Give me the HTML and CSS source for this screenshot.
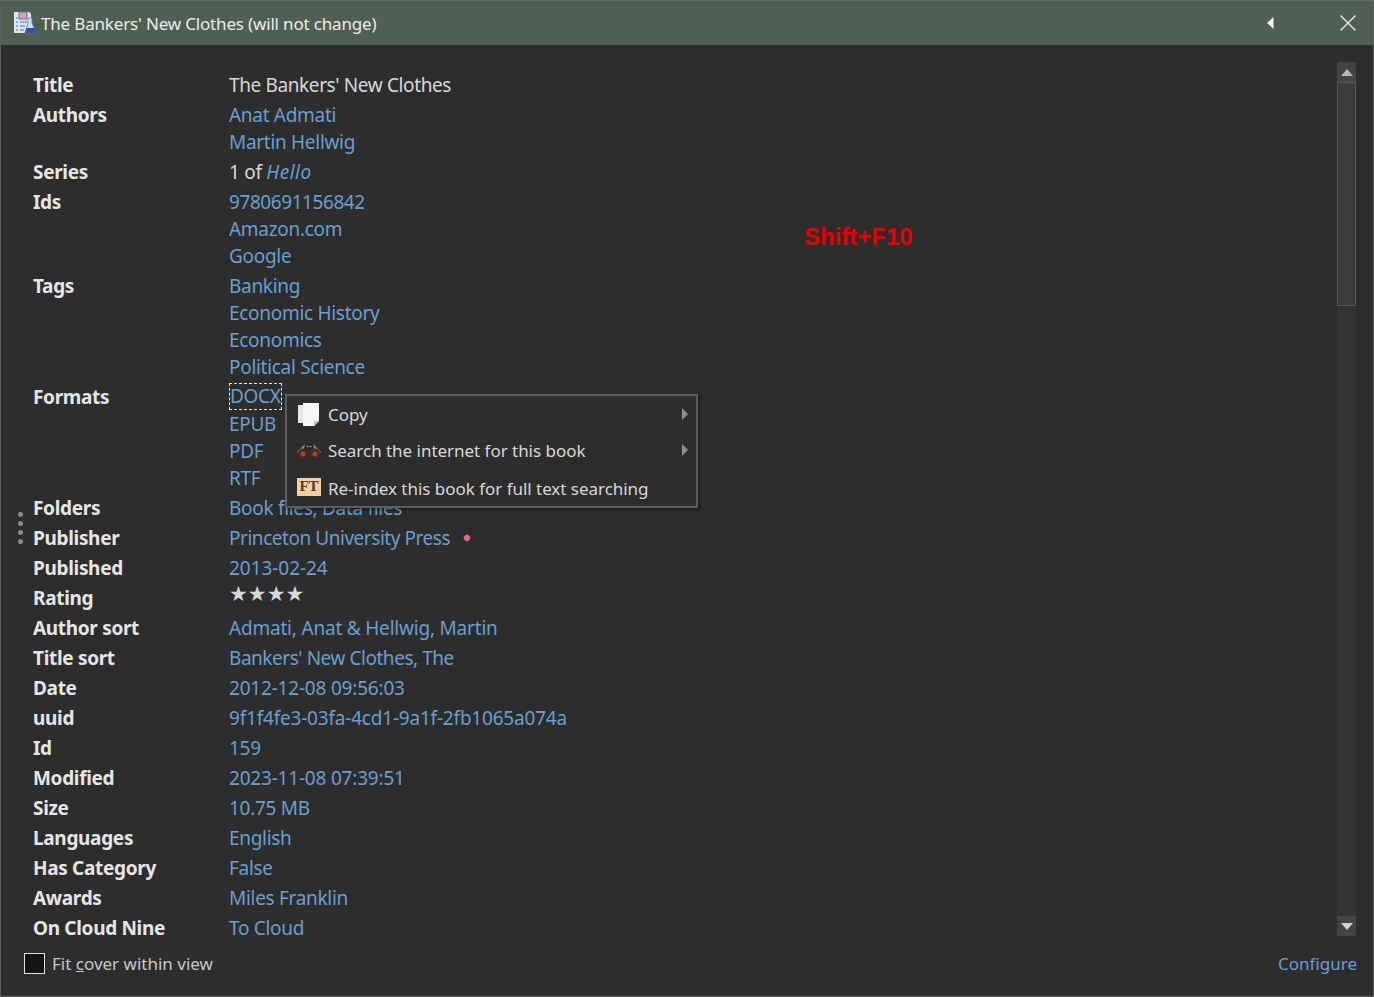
FILE: index.html
```html
<!DOCTYPE html>
<html lang="en">
<head>
<meta charset="utf-8">
<title>The Bankers' New Clothes (will not change)</title>
<link rel="stylesheet" href="styles.css">
</head>
<body>
<div class="window">
  <header class="titlebar">
    <svg class="app-icon" width="24" height="26" viewBox="0 0 24 26">
      <path d="M1 3h15l2 2v19H1z" fill="#dfe6f2"/>
      <path d="M6 3h8v7H6z" fill="#c9a3b4" stroke="#7d6a90" stroke-width="1"/>
      <path d="M3 9h2M3 13h2M3 17h2M3 21h2M7 13h7M7 17h5M7 21h4" stroke="#5a6c9a" stroke-width="1.2"/>
      <path d="M15 9h4v5l4 10H12l3-10z" fill="#cfdcea" stroke="#6f7f99" stroke-width=".8"/>
      <path d="M13.5 19h8l1.5 5H12z" fill="#2f55a8"/>
    </svg>
    <span class="title-text">The Bankers' New Clothes (will not change)</span>
    <svg class="prev-icon" width="8" height="14" viewBox="0 0 8 14"><path d="M7.500 1v12L1 7z" fill="#f4f4f4"/></svg>
    <svg class="close-icon" width="16" height="16" viewBox="0 0 16 16"><path d="M.5.5l15 15M15.500.5l-15 15" stroke="#f2f2f2" stroke-width="1.200" fill="none"/></svg>
  </header>

  <main class="body-row">
    <div class="details">
      <div class="label">Title</div><div class="value plain narrow-plain">The Bankers' New Clothes</div>
      <div class="label">Authors</div><div class="value"><a>Anat Admati</a><a>Martin Hellwig</a></div>
      <div class="label">Series</div><div class="value plain">1 of <a class="inline"><em>Hello</em></a></div>
      <div class="label">Ids</div><div class="value"><a class="digits">9780691156842</a><a>Amazon.com</a><a>Google</a></div>
      <div class="label">Tags</div><div class="value"><a>Banking</a><a>Economic History</a><a>Economics</a><a>Political Science</a></div>
      <div class="label">Formats</div><div class="value"><a><span class="focused">DOCX</span></a><a>EPUB</a><a>PDF</a><a>RTF</a></div>
      <div class="label">Folders</div><div class="value"><a>Book files, Data files</a></div>
      <div class="label">Publisher</div><div class="value"><a class="narrow">Princeton University Press<span class="pink-dot"></span></a></div>
      <div class="label">Published</div><div class="value"><a class="loose">2013-02-24</a></div>
      <div class="label">Rating</div><div class="value plain stars">★★★★</div>
      <div class="label">Author sort</div><div class="value"><a class="stamp">Admati, Anat &amp; Hellwig, Martin</a></div>
      <div class="label">Title sort</div><div class="value"><a class="narrow">Bankers' New Clothes, The</a></div>
      <div class="label">Date</div><div class="value"><a class="stamp">2012-12-08 09:56:03</a></div>
      <div class="label">uuid</div><div class="value"><a class="stamp">9f1f4fe3-03fa-4cd1-9a1f-2fb1065a074a</a></div>
      <div class="label">Id</div><div class="value"><a>159</a></div>
      <div class="label">Modified</div><div class="value"><a class="stamp">2023-11-08 07:39:51</a></div>
      <div class="label">Size</div><div class="value"><a>10.75 MB</a></div>
      <div class="label">Languages</div><div class="value"><a>English</a></div>
      <div class="label">Has Category</div><div class="value"><a>False</a></div>
      <div class="label">Awards</div><div class="value"><a>Miles Franklin</a></div>
      <div class="label">On Cloud Nine</div><div class="value"><a>To Cloud</a></div>
    </div>
    <div class="scrollbar">
      <div class="sb-btn"><svg width="12" height="7" viewBox="0 0 12 7"><path d="M6 0l6 7H0z" fill="#b5b5b5"/></svg></div>
      <div class="sb-thumb"></div>
      <div class="sb-track"></div>
      <div class="sb-btn"><svg width="12" height="7" viewBox="0 0 12 7"><path d="M0 0h12L6 7z" fill="#d0d0d0"/></svg></div>
    </div>
  </main>

  <footer class="footer">
    <label class="fit"><span class="checkbox"></span><span>Fit <u>c</u>over within view</span></label>
    <a class="configure">Configure</a>
  </footer>

  <div class="grip"><i></i><i></i><i></i><i></i></div>
  <div class="shortcut">Shift+F10</div>

  <div class="menu">
    <div class="menu-item">
      <svg class="menu-icon" width="24" height="24" viewBox="0 0 24 24">
        <path d="M1 3h12v18H1z" fill="#e4e4e4"/>
        <path d="M6 1h16v18l-5 5H6z" fill="#f7f7f7"/>
        <path d="M17 24v-5h5z" fill="#bdbdbd"/>
      </svg>
      <span class="menu-text">Copy</span>
      <span class="arrow"></span>
    </div>
    <div class="menu-item">
      <svg class="menu-icon" width="24" height="24" viewBox="0 0 24 24">
        <path d="M8 6L0 14l3 3 7-7zM16 6l8 8-3 3-7-7z" fill="#8c8c90"/>
        <path d="M8 6h8l1 5H7z" fill="#26262c"/>
        <circle cx="10.500" cy="8.500" r="1" fill="#9a9a9e"/>
        <circle cx="13.500" cy="8.500" r="1" fill="#9a9a9e"/>
        <circle cx="6" cy="15.500" r="5" fill="#4f261c"/>
        <circle cx="18" cy="15.500" r="5" fill="#4f261c"/>
        <circle cx="6" cy="16" r="2.500" fill="#8f4f36"/>
        <circle cx="18" cy="16" r="2.500" fill="#8f4f36"/>
      </svg>
      <span class="menu-text">Search the internet for this book</span>
      <span class="arrow"></span>
    </div>
    <div class="menu-item last">
      <span class="ft-icon">FT</span>
      <span class="menu-text">Re-index this book for full text searching</span>
    </div>
  </div>
</div>
</body>
</html>
```

FILE: styles.css
```css
* { box-sizing: border-box; }
html, body { margin: 0; height: 100%; }
body {
  background: #2d2d2d;
  font-family: "Noto Sans", "Open Sans", sans-serif;
  font-size: 19px;
  letter-spacing: -0.3px;
  color: #dcdcdc;
  overflow: hidden;
}
.window {
  position: relative;
  width: 1374px;
  height: 997px;
  display: flex;
  flex-direction: column;
  border: 1px solid #5c5f5c;
  border-top: 0;
}
.titlebar {
  height: 45px;
  flex: none;
  display: flex;
  align-items: center;
  background: #505f53;
  border-top: 1px solid #5f6c60;
  padding: 0 17px 0 12px;
  color: #ececec;
}
.app-icon { flex: none; margin-right: 4px; margin-top: -2px; }
.title-text { flex: 1; font-size: 17px; letter-spacing: -0.17px; }
.prev-icon { flex: none; margin-right: 66px; }
.close-icon { flex: none; }

.body-row {
  flex: 1;
  min-height: 0;
  display: flex;
  padding: 17px 17px 0 32px;
}
.details {
  flex: 1;
  display: grid;
  grid-template-columns: 196px 1fr;
  grid-auto-rows: min-content;
  row-gap: 3px;
  padding-top: 10px;
  line-height: 27px;
}
.label { font-weight: 700; color: #e6e6e6; letter-spacing: -0.32px; }
.value a { display: block; color: #6a9fd0; }
.value a.inline { display: inline; }
.value a.inline em { letter-spacing: 0.5px; }
.value a.stamp { letter-spacing: -0.2px; }
.value a.loose { letter-spacing: -0.05px; }
.value a.narrow { letter-spacing: -0.46px; }
.value a.digits { letter-spacing: -0.43px; }
.value.plain { color: #d8d8d8; }
.value.narrow-plain { letter-spacing: -0.38px; }
.focused { border: 1px dashed #e8e8e8; display: inline-block; height: 27px; line-height: 25px; margin-top: -1px; vertical-align: top; }
.pink-dot {
  display: inline-block;
  width: 6px; height: 6px;
  margin-left: 14px;
  vertical-align: 4px;
  background: #df6c94;
  transform: rotate(45deg);
  border-radius: 2px;
}
.stars { font-size: 21px; letter-spacing: 0; line-height: 18px; font-family: "DejaVu Sans", sans-serif; color: #e8e8e8; }

.scrollbar {
  flex: none;
  width: 19px;
  height: 874px;
  display: flex;
  flex-direction: column;
}
.sb-btn {
  flex: none;
  height: 20px;
  display: flex;
  align-items: center;
  justify-content: center;
  background: #444;
}
.sb-thumb {
  flex: none;
  height: 224px;
  background: #3c3c3c;
  border: 1px solid #555;
}
.sb-track { flex: 1; background: #333; }

.footer {
  flex: none;
  height: 56px;
  display: flex;
  align-items: center;
  justify-content: space-between;
  padding: 0 16px 10px 23px;
  font-size: 17px;
  letter-spacing: 0;
}
.fit { display: flex; align-items: center; gap: 7px; color: #c8c8c8; }
.checkbox { width: 21px; height: 21px; background: #141414; border: 1px solid #e2e2e2; }
.configure { color: #6a9fd0; }

.grip {
  position: absolute;
  left: 17px;
  top: 512px;
  display: flex;
  flex-direction: column;
  gap: 4px;
}
.grip i { width: 5px; height: 5px; border-radius: 50%; background: #8c8c8c; }

.shortcut {
  position: absolute;
  left: 803px;
  top: 223px;
  font-family: "Liberation Sans", Arial, sans-serif;
  font-weight: 700;
  font-size: 24px;
  letter-spacing: 0;
  line-height: 28px;
  color: #e60000;
}

.menu {
  position: absolute;
  left: 284px;
  top: 394px;
  width: 413px;
  height: 114px;
  background: #2d2d2d;
  border: 2px solid #5e5e5e;
  box-shadow: 2px 2px 3px rgba(0,0,0,.4);
  padding: 0 0 0 10px;
  display: flex;
  flex-direction: column;
}
.menu-item {
  height: 36px;
  display: flex;
  align-items: center;
  color: #d8d8d8;
  font-size: 17px;
  letter-spacing: -0.03px;
}
.menu-item.last { height: 38px; padding-top: 3px; }
.menu-icon, .ft-icon { flex: none; margin-right: 7px; }
.menu-text { flex: 1; }
.ft-icon {
  width: 24px;
  height: 18px;
  margin-top: -3px;
  background: #f4cfa2;
  color: #4a3a2a;
  font-family: "Liberation Serif", serif;
  font-weight: 700;
  font-size: 15px;
  line-height: 16px;
  text-align: center;
  letter-spacing: 0;
}
.arrow {
  flex: none;
  width: 0; height: 0;
  margin-right: 8px;
  border-left: 6px solid #8f8f8f;
  border-top: 6px solid transparent;
  border-bottom: 6px solid transparent;
}
```
